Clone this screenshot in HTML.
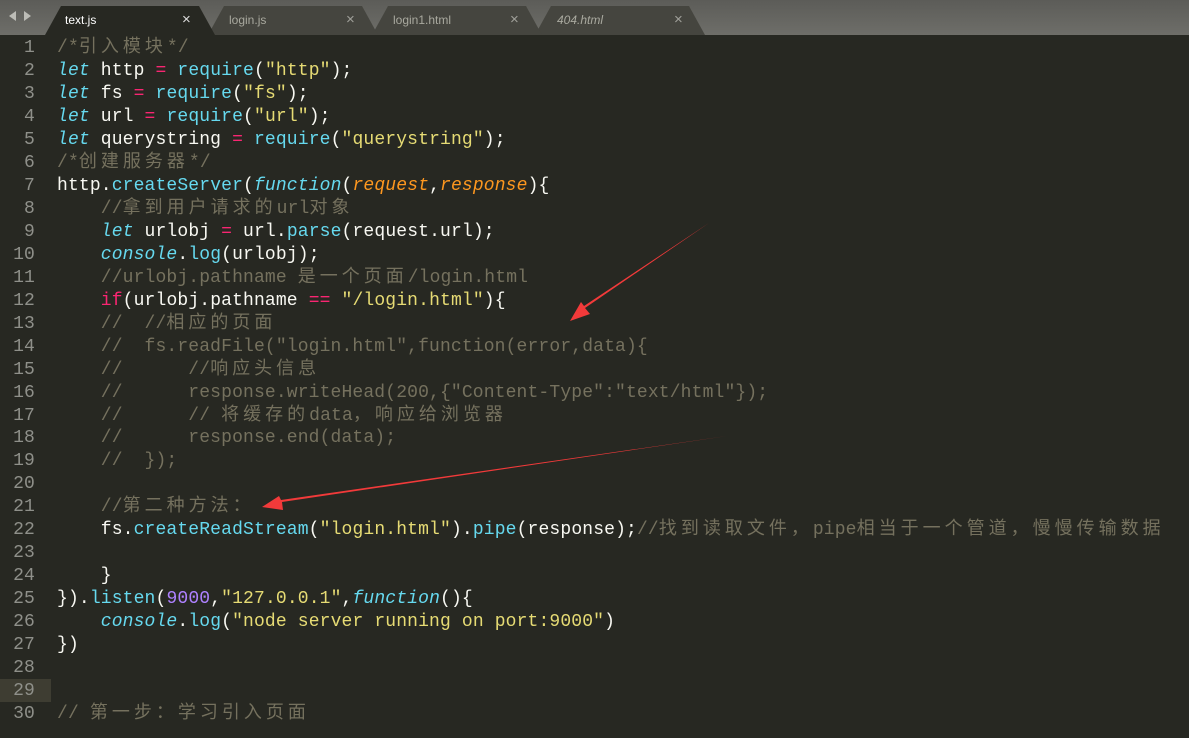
<!DOCTYPE html>
<html><head><meta charset="utf-8"><style>
body{margin:0;width:1189px;height:738px;overflow:hidden;background:#272822;position:relative;font-family:"Liberation Mono","Noto Sans CJK SC",monospace}
#bar{position:absolute;left:0;top:0;width:1189px;height:35px;background:linear-gradient(#5c5c58,#6e6e69)}
.tab{position:absolute;top:6px;height:29px;background:#45453f;clip-path:polygon(0 100%,16px 0,calc(100% - 16px) 0,100% 100%);font:12px "Liberation Sans",sans-serif;color:#a9a99f}
.tab span{position:absolute;top:7px}
.tab b{position:absolute;top:5px;font-weight:normal;font-size:15px;color:#a0a09a}
#code{position:absolute;left:0;top:37px;width:1189px}
.l{height:22.97px;line-height:22.97px;font-size:18px;letter-spacing:0.14px;white-space:pre;position:relative;color:#f8f8f2}
.n{position:absolute;left:0;width:35px;text-align:right;color:#8f908a}
.t{position:absolute;left:57px}
.cm{color:#75715e}.k{color:#66d9ef;font-style:italic}.o{color:#f92672}.s{color:#e6db74}.f{color:#66d9ef}.p{color:#fd971f;font-style:italic}.nu{color:#ae81ff}
.c{letter-spacing:4px}
</style></head><body>
<div id="bar">
<div style="position:absolute;left:9px;top:11px;width:0;height:0;border:5px solid transparent;border-right:7px solid #bcbcb6;border-left:0"></div>
<div style="position:absolute;left:24px;top:11px;width:0;height:0;border:5px solid transparent;border-left:7px solid #bcbcb6;border-right:0"></div>
<div class="tab" style="left:535px;width:170px"><span style="left:22px;font-style:italic">404.html</span><b style="left:139px">×</b></div>
<div class="tab" style="left:372px;width:170px"><span style="left:21px">login1.html</span><b style="left:138px">×</b></div>
<div class="tab" style="left:208px;width:170px"><span style="left:21px">login.js</span><b style="left:138px">×</b></div>
<div class="tab" style="left:45px;width:170px;background:#272822;color:#fff"><span style="left:20px">text.js</span><b style="left:137px;color:#ddd">×</b></div>
</div>
<div style="position:absolute;left:0;top:679px;width:51px;height:23px;background:#3e3d32"></div>
<div id="code">
<div class="l"><span class="n">1</span><span class="t cm">/*<span class="c">引入模块</span>*/</span></div>
<div class="l"><span class="n">2</span><span class="t"><span class="k">let</span> http <span class="o">=</span> <span class="f">require</span>(<span class="s">"http"</span>);</span></div>
<div class="l"><span class="n">3</span><span class="t"><span class="k">let</span> fs <span class="o">=</span> <span class="f">require</span>(<span class="s">"fs"</span>);</span></div>
<div class="l"><span class="n">4</span><span class="t"><span class="k">let</span> url <span class="o">=</span> <span class="f">require</span>(<span class="s">"url"</span>);</span></div>
<div class="l"><span class="n">5</span><span class="t"><span class="k">let</span> querystring <span class="o">=</span> <span class="f">require</span>(<span class="s">"querystring"</span>);</span></div>
<div class="l"><span class="n">6</span><span class="t cm">/*<span class="c">创建服务器</span>*/</span></div>
<div class="l"><span class="n">7</span><span class="t">http.<span class="f">createServer</span>(<span class="k">function</span>(<span class="p">request</span>,<span class="p">response</span>){</span></div>
<div class="l"><span class="n">8</span><span class="t cm">    //<span class="c">拿到用户请求的</span>url<span class="c">对象</span></span></div>
<div class="l"><span class="n">9</span><span class="t">    <span class="k">let</span> urlobj <span class="o">=</span> url.<span class="f">parse</span>(request.url);</span></div>
<div class="l"><span class="n">10</span><span class="t">    <span class="k">console</span>.<span class="f">log</span>(urlobj);</span></div>
<div class="l"><span class="n">11</span><span class="t cm">    //urlobj.pathname <span class="c">是一个页面</span>/login.html</span></div>
<div class="l"><span class="n">12</span><span class="t">    <span class="o">if</span>(urlobj.pathname <span class="o">==</span> <span class="s">"/login.html"</span>){</span></div>
<div class="l"><span class="n">13</span><span class="t cm">    //  //<span class="c">相应的页面</span></span></div>
<div class="l"><span class="n">14</span><span class="t cm">    //  fs.readFile("login.html",function(error,data){</span></div>
<div class="l"><span class="n">15</span><span class="t cm">    //      //<span class="c">响应头信息</span></span></div>
<div class="l"><span class="n">16</span><span class="t cm">    //      response.writeHead(200,{"Content-Type":"text/html"});</span></div>
<div class="l"><span class="n">17</span><span class="t cm">    //      // <span class="c">将缓存的</span>data<span class="c">，响应给浏览器</span></span></div>
<div class="l"><span class="n">18</span><span class="t cm">    //      response.end(data);</span></div>
<div class="l"><span class="n">19</span><span class="t cm">    //  });</span></div>
<div class="l"><span class="n">20</span></div>
<div class="l"><span class="n">21</span><span class="t cm">    //<span class="c">第二种方法：</span></span></div>
<div class="l"><span class="n">22</span><span class="t">    fs.<span class="f">createReadStream</span>(<span class="s">"login.html"</span>).<span class="f">pipe</span>(response);<span class="cm">//<span class="c">找到读取文件，</span>pipe<span class="c">相当于一个管道，慢慢传输数据</span></span></span></div>
<div class="l"><span class="n">23</span></div>
<div class="l"><span class="n">24</span><span class="t">    }</span></div>
<div class="l"><span class="n">25</span><span class="t">}).<span class="f">listen</span>(<span class="nu">9000</span>,<span class="s">"127.0.0.1"</span>,<span class="k">function</span>(){</span></div>
<div class="l"><span class="n">26</span><span class="t">    <span class="k">console</span>.<span class="f">log</span>(<span class="s">"node server running on port:9000"</span>)</span></div>
<div class="l"><span class="n">27</span><span class="t">})</span></div>
<div class="l"><span class="n">28</span></div>
<div class="l"><span class="n">29</span></div>
<div class="l"><span class="n">30</span><span class="t cm">// <span class="c">第一步：学习引入页面</span></span></div>
</div>
<svg style="position:absolute;left:0;top:0" width="1189" height="738">
<polygon points="709,223 585,308 590,314 570,321 581,302 584,306" fill="#f23a3a"/>
<polygon points="727,436 282,502 283,510 262,507 279,496 281,500" fill="#f23a3a"/>
</svg>
</body></html>
